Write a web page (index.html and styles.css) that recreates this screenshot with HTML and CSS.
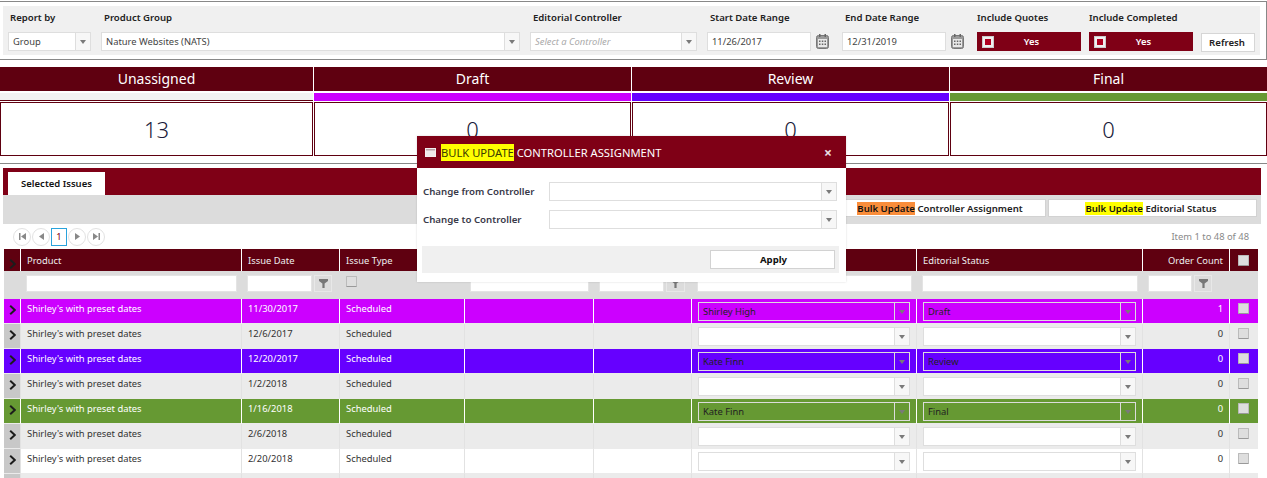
FILE: index.html
```html
<!DOCTYPE html>
<html lang="en">
<head>
<meta charset="utf-8">
<title>Issues</title>
<link rel="stylesheet" href="styles.css">
</head>
<body>
<svg class="defs" width="0" height="0" aria-hidden="true">
  <symbol id="funnel" viewBox="0 0 9 9"><path d="M0 0h9v2L5.600 4.500V9H3.400V4.500L0 2z" fill="#777"/></symbol>
  <symbol id="chev" viewBox="0 0 7 10"><path d="M1.200 .8 5.800 5 1.200 9.200" fill="none" stroke="#1c1c1c" stroke-width="2"/></symbol>
  <symbol id="cal" viewBox="0 0 13 15"><rect x=".5" y="1.500" width="12" height="13" rx="2" fill="#9a9a9a" stroke="#777"/><rect x="2" y="5" width="9" height="8" fill="#e8e8e8"/><path d="M3 0h1.500v3H3zM8.500 0H10v3H8.500z" fill="#666"/><path d="M3 6.500h1.500V8H3zM5.800 6.500h1.500V8H5.800zM8.500 6.500H10V8H8.500zM3 9.500h1.500V11H3zM5.800 9.500h1.500V11H5.800zM8.500 9.500H10V11H8.500z" fill="#666"/></symbol>
  <symbol id="first" viewBox="0 0 7 7"><path d="M0 0h1.500v7H0zM7 0v7L2 3.500z" fill="#888"/></symbol>
  <symbol id="prev" viewBox="0 0 7 7"><path d="M6 0v7L1 3.500z" fill="#888"/></symbol>
  <symbol id="next" viewBox="0 0 7 7"><path d="M1 0v7l5-3.500z" fill="#888"/></symbol>
  <symbol id="last" viewBox="0 0 7 7"><path d="M7 0H5.500v7H7zM0 0v7l5-3.500z" fill="#888"/></symbol>
</svg>

<div class="page">
  <section class="filters">
    <div class="filters-inner">
      <div class="field w-group"><label class="lbl lbl-first">Report by</label>
        <div class="sel"><span class="sel-v">Group</span><span class="sel-a"><i class="caret"></i></span></div></div>
      <div class="field w-product"><label class="lbl">Product Group</label>
        <div class="sel"><span class="sel-v">Nature Websites (NATS)</span><span class="sel-a"><i class="caret"></i></span></div></div>
      <div class="field w-ctrl"><label class="lbl">Editorial Controller</label>
        <div class="sel"><span class="sel-v ph">Select a Controller</span><span class="sel-a"><i class="caret"></i></span></div></div>
      <div class="field w-date"><label class="lbl">Start Date Range</label>
        <div class="date-line"><span class="date">11/26/2017</span><svg class="cal"><use href="#cal"/></svg></div></div>
      <div class="field w-date"><label class="lbl">End Date Range</label>
        <div class="date-line"><span class="date">12/31/2019</span><svg class="cal"><use href="#cal"/></svg></div></div>
      <div class="field w-toggle"><label class="lbl flush">Include Quotes</label>
        <div class="toggle"><span class="tick"><i></i></span><span class="toggle-t">Yes</span></div></div>
      <div class="field w-toggle"><label class="lbl flush">Include Completed</label>
        <div class="toggle"><span class="tick"><i></i></span><span class="toggle-t">Yes</span></div></div>
      <button class="refresh">Refresh</button>
    </div>
  </section>

  <section class="tiles">
    <div class="tile"><div class="tile-h">Unassigned</div><div class="tile-b b-none"></div><div class="tile-v">13</div></div>
    <div class="tile"><div class="tile-h">Draft</div><div class="tile-b b-draft"></div><div class="tile-v">0</div></div>
    <div class="tile"><div class="tile-h">Review</div><div class="tile-b b-review"></div><div class="tile-v">0</div></div>
    <div class="tile"><div class="tile-h">Final</div><div class="tile-b b-final"></div><div class="tile-v">0</div></div>
  </section>

  <section class="issues">
    <div class="tabbar"><div class="tab">Selected Issues</div></div>
    <div class="toolbar">
      <button class="bulk"><mark class="hl-o">Bulk Update</mark> Controller Assignment</button>
      <button class="bulk"><mark class="hl-y">Bulk Update</mark> Editorial Status</button>
    </div>
    <div class="pager">
      <span class="pg"><svg class="pg-i"><use href="#first"/></svg></span>
      <span class="pg"><svg class="pg-i"><use href="#prev"/></svg></span>
      <span class="pg-cur">1</span>
      <span class="pg"><svg class="pg-i"><use href="#next"/></svg></span>
      <span class="pg"><svg class="pg-i"><use href="#last"/></svg></span>
      <span class="pg-info">Item 1 to 48 of 48</span>
    </div>
    <table class="grid">
      <colgroup><col class="c0"><col class="c1"><col class="c2"><col class="c3"><col class="c4"><col class="c5"><col class="c6"><col class="c7"><col class="c8"><col class="c9"></colgroup>
      <thead>
        <tr class="hd">
          <th class="exp"><svg class="chev"><use href="#chev"/></svg></th>
          <th>Product</th><th>Issue Date</th><th>Issue Type</th><th></th><th></th><th></th><th>Editorial Status</th><th class="num">Order Count</th><th><span class="chk"></span></th>
        </tr>
        <tr class="flt">
          <td class="exp"></td>
          <td><div class="f"><span class="fi"></span></div></td>
          <td class="pr7"><div class="f"><span class="fi"></span><span class="fb"><svg class="fun"><use href="#funnel"/></svg></span></div></td>
          <td><span class="chk chk-f"></span></td>
          <td><div class="f"><span class="fi"></span></div></td>
          <td class="pr6"><div class="f"><span class="fi"></span><span class="fb fb-w"><svg class="fun"><use href="#funnel"/></svg></span></div></td>
          <td><div class="f"><span class="fi"></span></div></td>
          <td><div class="f"><span class="fi"></span></div></td>
          <td class="pr17"><div class="f"><span class="fi"></span><span class="fb"><svg class="fun"><use href="#funnel"/></svg></span></div></td>
          <td></td>
        </tr>
      </thead>
      <tbody>
        <tr class="r draft">
          <td class="exp"><svg class="chev"><use href="#chev"/></svg></td><td>Shirley's with preset dates</td><td>11/30/2017</td><td>Scheduled</td><td></td><td></td>
          <td><div class="sel sel-c"><span class="sel-v">Shirley High</span><span class="sel-a"><i class="caret"></i></span></div></td>
          <td><div class="sel sel-c"><span class="sel-v">Draft</span><span class="sel-a"><i class="caret"></i></span></div></td>
          <td class="num">1</td><td><span class="chk"></span></td>
        </tr>
        <tr class="r alt">
          <td class="exp"><svg class="chev"><use href="#chev"/></svg></td><td>Shirley's with preset dates</td><td>12/6/2017</td><td>Scheduled</td><td></td><td></td>
          <td><div class="sel"><span class="sel-v"></span><span class="sel-a"><i class="caret"></i></span></div></td>
          <td><div class="sel"><span class="sel-v"></span><span class="sel-a"><i class="caret"></i></span></div></td>
          <td class="num">0</td><td><span class="chk"></span></td>
        </tr>
        <tr class="r review">
          <td class="exp"><svg class="chev"><use href="#chev"/></svg></td><td>Shirley's with preset dates</td><td>12/20/2017</td><td>Scheduled</td><td></td><td></td>
          <td><div class="sel sel-c"><span class="sel-v">Kate Finn</span><span class="sel-a"><i class="caret"></i></span></div></td>
          <td><div class="sel sel-c"><span class="sel-v">Review</span><span class="sel-a"><i class="caret"></i></span></div></td>
          <td class="num">0</td><td><span class="chk"></span></td>
        </tr>
        <tr class="r alt">
          <td class="exp"><svg class="chev"><use href="#chev"/></svg></td><td>Shirley's with preset dates</td><td>1/2/2018</td><td>Scheduled</td><td></td><td></td>
          <td><div class="sel"><span class="sel-v"></span><span class="sel-a"><i class="caret"></i></span></div></td>
          <td><div class="sel"><span class="sel-v"></span><span class="sel-a"><i class="caret"></i></span></div></td>
          <td class="num">0</td><td><span class="chk"></span></td>
        </tr>
        <tr class="r final">
          <td class="exp"><svg class="chev"><use href="#chev"/></svg></td><td>Shirley's with preset dates</td><td>1/16/2018</td><td>Scheduled</td><td></td><td></td>
          <td><div class="sel sel-c"><span class="sel-v">Kate Finn</span><span class="sel-a"><i class="caret"></i></span></div></td>
          <td><div class="sel sel-c"><span class="sel-v">Final</span><span class="sel-a"><i class="caret"></i></span></div></td>
          <td class="num">0</td><td><span class="chk"></span></td>
        </tr>
        <tr class="r alt">
          <td class="exp"><svg class="chev"><use href="#chev"/></svg></td><td>Shirley's with preset dates</td><td>2/6/2018</td><td>Scheduled</td><td></td><td></td>
          <td><div class="sel"><span class="sel-v"></span><span class="sel-a"><i class="caret"></i></span></div></td>
          <td><div class="sel"><span class="sel-v"></span><span class="sel-a"><i class="caret"></i></span></div></td>
          <td class="num">0</td><td><span class="chk"></span></td>
        </tr>
        <tr class="r plain">
          <td class="exp"><svg class="chev"><use href="#chev"/></svg></td><td>Shirley's with preset dates</td><td>2/20/2018</td><td>Scheduled</td><td></td><td></td>
          <td><div class="sel"><span class="sel-v"></span><span class="sel-a"><i class="caret"></i></span></div></td>
          <td><div class="sel"><span class="sel-v"></span><span class="sel-a"><i class="caret"></i></span></div></td>
          <td class="num">0</td><td><span class="chk"></span></td>
        </tr>
        <tr class="r alt">
          <td class="exp"></td><td></td><td></td><td></td><td></td><td></td><td></td><td></td><td></td><td></td>
        </tr>
      </tbody>
    </table>
  </section>

  <aside class="modal">
    <header class="modal-h">
      <svg class="win" viewBox="0 0 11 9"><rect x=".5" y=".5" width="10" height="8" fill="#efe9ea" stroke="#f4eeef"/><rect x="1" y="1" width="9" height="1.500" fill="#b9a3a8"/></svg>
      <span class="modal-t"><mark class="hl-t">BULK UPDATE</mark> CONTROLLER ASSIGNMENT</span>
      <span class="close">×</span>
    </header>
    <div class="modal-b">
      <div class="m-row"><label class="m-lbl">Change from Controller</label><div class="sel m-sel"><span class="sel-v"></span><span class="sel-a"><i class="caret"></i></span></div></div>
      <div class="m-row"><label class="m-lbl">Change to Controller</label><div class="sel m-sel"><span class="sel-v"></span><span class="sel-a"><i class="caret"></i></span></div></div>
    </div>
    <footer class="modal-f"><button class="apply">Apply</button></footer>
  </aside>
</div>
</body>
</html>
```

FILE: styles.css
```css
* { box-sizing: border-box; }
html, body { margin: 0; padding: 0; height: 478px; overflow: hidden; background: #fff; }
body { font-family: "Noto Sans", "Open Sans", sans-serif; font-size: 9.400px; color: #333; }
.defs { position: absolute; }
.page { position: relative; width: 1267px; height: 478px; overflow: hidden; }
button { font-family: inherit; cursor: default; }

/* Filter panel */
.filters { margin-top: 1px; height: 59px; border-top: 1px solid #888; border-bottom: 1px solid #888; border-right: 1px solid #888; padding: 4px 6px 0 3px; }
.filters-inner { display: flex; height: 49px; padding: 5px 5px 0; background: #f0f0f0; }
.field { display: flex; flex-direction: column; flex: none; }
.lbl { height: 14px; line-height: 14px; margin-bottom: 7px; padding-left: 3px; font-size: 9.600px; font-weight: 600; color: #222; white-space: nowrap; }
.lbl-first { padding-left: 2px; }
.flush { padding-left: 0; }
.w-group { width: 83px; margin-right: 10px; }
.w-product { width: 419px; margin-right: 10px; }
.w-ctrl { width: 167px; margin-right: 10px; }
.w-date { width: 125px; margin-right: 10px; }
.w-toggle { width: 104px; margin-right: 8px; }

.sel { display: flex; height: 19px; border: 1px solid #dedede; background: #fff; }
.sel-v { flex: 1; min-width: 0; padding-left: 4px; line-height: 18px; color: #444; white-space: nowrap; overflow: hidden; }
.sel-a { flex: none; width: 15px; display: flex; align-items: center; justify-content: center; background: #f7f7f7; border-left: 1px solid #dedede; }
.caret { width: 0; height: 0; border-left: 3.500px solid transparent; border-right: 3.500px solid transparent; border-top: 4px solid #7a7a7a; }
.ph { color: #aaa; font-style: italic; }

.date-line { display: flex; align-items: center; }
.date { width: 104px; height: 19px; padding-left: 4px; line-height: 18px; background: #fff; border: 1px solid #dedede; color: #444; }
.cal { width: 13px; height: 15px; margin-left: 5px; }

.toggle { display: flex; align-items: center; height: 19px; background: #7f0016; color: #fff; }
.tick { width: 12px; height: 12px; margin-left: 5px; background: #f0f0f0; border: 1px solid #ccc; display: flex; align-items: center; justify-content: center; }
.tick i { display: block; width: 6px; height: 6px; background: #b00020; }
.toggle-t { flex: 1; text-align: center; padding-right: 12px; font-weight: 600; }
.refresh { align-self: flex-end; flex: none; width: 54px; height: 19px; margin-bottom: 3px; padding: 0 2px 0 0; background: #fff; border: 1px solid #d6d6d6; font-size: 9.600px; font-weight: 600; color: #222; }

/* Status tiles */
.tiles { display: grid; grid-template-columns: 313px 317px 317px 317px; column-gap: 1px; margin-top: 7px; }
.tile { display: flex; flex-direction: column; }
.tile-h { height: 24px; line-height: 24px; text-align: center; font-size: 14px; color: #fff; background: #5f0010; }
.tile-b { height: 8px; margin-top: 2px; margin-bottom: 1px; }
.b-none { background: #f2f2f2; border-bottom: 1px solid #5f0010; }
.b-draft { background: #cc00ff; }
.b-review { background: #6600ff; }
.b-final { background: #669933; }
.tile-v { height: 54px; line-height: 52px; text-align: center; font-size: 22px; font-weight: 300; color: #1a1a3a; border: 1px solid #5f0010; background: #fff; }

/* Issues panel */
.issues { margin-top: 7px; padding: 4px 6px 0 3px; border-top: 1px solid #888; }
.tabbar { height: 27px; padding: 4px 0 0 5px; background: #7f0016; }
.tab { width: 97px; height: 23px; line-height: 23px; text-align: center; background: #fff; color: #111; font-size: 9.500px; font-weight: 600; }
.toolbar { display: flex; justify-content: flex-end; gap: 2px; height: 29px; padding: 4px 4px 0 0; background: #dcdcdc; }
.bulk { width: 209px; height: 18px; padding: 0 3px 0 0; background: #fff; border: 1px solid #d2d2d2; font-size: 9.600px; font-weight: 600; color: #222; }
.hl-o { background: #f98d3a; color: #111; }
.hl-y { background: #ffff00; color: #111; }

.pager { display: flex; align-items: center; height: 25px; margin: 0 3px 0 2px; padding-left: 8px; gap: 1px; background: #fff; }
.pg { width: 18px; height: 18px; border: 1px solid #e2e2e2; border-radius: 50%; display: flex; align-items: center; justify-content: center; }
.pg-i { width: 7px; height: 7px; }
.pg-cur { width: 16px; height: 18px; border: 1px solid #29a3dc; line-height: 16px; text-align: center; color: #7f0016; }
.pg-info { margin-left: auto; padding-right: 9px; color: #8a8a8a; }

.grid { width: 1254px; margin-left: 1px; table-layout: fixed; border-collapse: separate; border-spacing: 0; }
.c0 { width: 16px; } .c1 { width: 221px; } .c2 { width: 98px; } .c3 { width: 125px; } .c4 { width: 129px; }
.c5 { width: 98px; } .c6 { width: 225px; } .c7 { width: 226px; } .c8 { width: 87px; } .c9 { width: 29px; }

.hd th { height: 22px; padding: 0 6px; background: #5f0010; color: #eee; font-size: 9.400px; font-weight: 400; text-align: left; border-left: 1px solid #fff; }
.hd th.exp { border-left: 0; padding: 0; }
.flt td { height: 28px; padding: 4px 4px 0 6px; background: #dcdcdc; vertical-align: top; }
.flt .exp { padding: 0; }
.flt .pr7 { padding-right: 7px; }
.flt .pr6 { padding-right: 6px; }
.flt .pr17 { padding-right: 17px; }
.f { display: flex; gap: 2px; }
.fi { flex: 1; min-width: 0; height: 17px; background: #fff; border: 1px solid #e4e4e4; }
.fb { flex: none; width: 18px; height: 17px; border: 1px solid #e8e8e8; background: #dcdcdc; display: flex; align-items: center; justify-content: center; }
.fb-w { width: 19px; }
.fun { width: 9px; height: 9px; }

.r td { height: 25px; padding: 3px 6px 0; line-height: 14px; vertical-align: top; border-left: 1px solid #e2e2e2; border-bottom: 1px solid #ebebeb; white-space: nowrap; }
.r td.exp { padding: 0; border-left: 0; text-align: center; background: #c8c8c8; }
.plain td { background: #fff; }
.alt td { background: #ebebeb; }
.draft td, .review td, .final td { color: #fff; border-left-color: #fff; }
.draft td { background: #cc00ff; }
.review td { background: #6600ff; }
.final td { background: #669933; }
.r.draft td.exp { background: #cc00ff; }
.r.review td.exp { background: #6600ff; }
.r.final td.exp { background: #669933; }
.chev { display: block; width: 7px; height: 10px; margin: 6px auto 0 5px; }
.hd .chev { margin: 7px 0 0 5px; }

.num { text-align: right !important; }
.r .sel-v { color: #333; }
.sel-c { background: transparent; border-color: #dcdcdc; }
.sel-c .sel-a { background: transparent; border-left-color: #dcdcdc; }
.sel-c .sel-v { color: #222 !important; font-weight: 400; }
.chk { display: block; width: 11px; height: 11px; margin: 1px 0 0 2px; background: #dedede; border: 1px solid #bbb; border-bottom-color: #999; border-radius: 1px; }
.hd .chk { margin: 0 0 0 2px; }
.chk-f { margin: 1px 0 0 1px; }

/* Modal */
.modal { position: absolute; left: 417px; top: 136px; width: 429px; height: 146px; background: #fff; box-shadow: 0 0 2px rgba(0,0,0,.15); }
.modal-h { display: flex; align-items: center; height: 32px; padding: 0 14px 0 8px; background: #7f0016; color: #fff; font-size: 11.200px; }
.win { width: 11px; height: 9px; margin-right: 5px; }
.modal-t { flex: 1; }
.hl-t { background: #ffff00; color: #3a3a00; padding: 1px 0; }
.close { font-size: 14px; font-weight: 700; color: #eadfe1; }
.modal-b { padding: 14px 9px 0 6px; height: 78px; }
.m-row { display: flex; align-items: center; height: 19px; margin-bottom: 9px; }
.m-lbl { flex: none; width: 126px; font-size: 9.700px; font-weight: 600; color: #3a3a4a; }
.m-sel { flex: 1; }
.modal-f { display: flex; justify-content: flex-end; height: 27px; margin: 0 7px 0 5px; padding: 4px 4px 0 0; background: #f0f0f0; }
.apply { width: 125px; height: 19px; padding: 0 0 0 2px; background: #fff; border: 1px solid #d2d2d2; font-size: 9.600px; font-weight: 700; color: #111; }
```
